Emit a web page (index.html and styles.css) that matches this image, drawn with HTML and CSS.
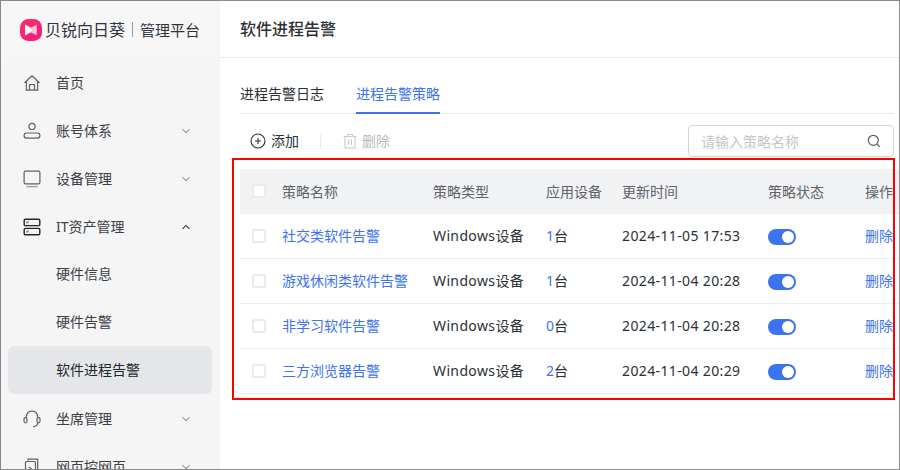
FILE: index.html
```html
<!DOCTYPE html>
<html lang="zh">
<head>
<meta charset="utf-8">
<title>软件进程告警</title>
<link rel="stylesheet" href="styles.css">
</head>
<body>
<div class="app">
  <aside class="sidebar">
    <div class="brand">
      <svg class="logo" width="22" height="22" viewBox="0 0 22 22"><defs><linearGradient id="lg" x1="0" y1="0" x2="1" y2="1"><stop offset="0" stop-color="#ff2f6f"/><stop offset="1" stop-color="#ef1a78"/></linearGradient></defs><rect width="22" height="22" rx="8.5" fill="url(#lg)"/><path d="M5.2 6.3 Q5 5.6 5.8 5.9 L11 8.4 L16.2 5.9 Q17 5.6 16.8 6.3 V15.7 Q17 16.4 16.2 16.1 L11 13.6 L5.8 16.1 Q5 16.4 5.2 15.7 Z" fill="#fbc4d8"/><path d="M5.2 6.3 Q5 5.6 5.8 5.9 L12.5 11 L5.8 16.1 Q5 16.4 5.2 15.7 Z" fill="#fff"/></svg>
      <span class="brand-name">贝锐向日葵</span>
      <span class="brand-sep"></span>
      <span class="brand-sub">管理平台</span>
    </div>
    <nav class="menu">
      <div class="item">
        <svg class="ico" viewBox="0 0 18 18" fill="none" stroke="#5b626c" stroke-width="1.2"><path d="M1.5 8.7 9 1.8l7.5 6.9M3.3 7.2v9h11.4v-9M6.5 16.2v-5.7h5v5.7"/></svg>
        <span class="label">首页</span>
      </div>
      <div class="item">
        <svg class="ico" viewBox="0 0 18 18" fill="none" stroke="#5b626c" stroke-width="1.2"><circle cx="9" cy="4.4" r="3.1"/><rect x="1.1" y="11" width="15.8" height="5.2" rx="2.4"/></svg>
        <span class="label">账号体系</span>
        <svg class="chev" viewBox="0 0 10 6" fill="none" stroke="#666" stroke-width="1"><path d="M1.5 1.2 5 4.6l3.5-3.4"/></svg>
      </div>
      <div class="item">
        <svg class="ico" viewBox="0 0 18 18" fill="none" stroke="#5b626c" stroke-width="1.2"><rect x="1.1" y="1.1" width="15.8" height="12.8" rx="1.5"/><path d="M3.5 16.6h11" stroke="#a5a9af" stroke-width="1.6"/></svg>
        <span class="label">设备管理</span>
        <svg class="chev" viewBox="0 0 10 6" fill="none" stroke="#666" stroke-width="1"><path d="M1.5 1.2 5 4.6l3.5-3.4"/></svg>
      </div>
      <div class="item">
        <svg class="ico" viewBox="0 0 18 18" fill="none" stroke="#23262b" stroke-width="1.4"><rect x="1.2" y="1.2" width="15.6" height="6.4" rx="1.2"/><rect x="1.2" y="10.4" width="15.6" height="6.4" rx="1.2"/><path d="M4 3.4v2.2M4 12.6v2.2" stroke="#5a6a90" stroke-width="1"/><path d="M4 3.9h2M4 13.1h2" stroke="#b5654f" stroke-width="1"/></svg>
        <span class="label">IT资产管理</span>
        <svg class="chev" viewBox="0 0 10 6" fill="none" stroke="#333" stroke-width="1.1"><path d="M1.5 4.8 5 1.4l3.5 3.4"/></svg>
      </div>
      <div class="item sub first"><span class="label">硬件信息</span></div>
      <div class="item sub"><span class="label">硬件告警</span></div>
      <div class="item sub active"><span class="label">软件进程告警</span></div>
      <div class="item">
        <svg class="ico" viewBox="0 0 18 18" fill="none" stroke="#5b626c" stroke-width="1.2"><path d="M3.3 8V6.8a5.7 5.7 0 0 1 11.4 0V8M14.8 13c-.3 2.2-2 3.4-4.6 3.6"/><rect x="1" y="7.6" width="3" height="5.2" rx="1.5"/><rect x="14" y="7.6" width="3" height="5.2" rx="1.5"/></svg>
        <span class="label">坐席管理</span>
        <svg class="chev" viewBox="0 0 10 6" fill="none" stroke="#666" stroke-width="1"><path d="M1.5 1.2 5 4.6l3.5-3.4"/></svg>
      </div>
      <div class="item">
        <svg class="ico" viewBox="0 0 18 18" fill="none" stroke="#5b626c" stroke-width="1.2"><path d="M5 2.5V1.2h9.7v14.5"/><rect x="2.5" y="3.5" width="10" height="13" rx="1"/><path d="M6 9l3 2.5L6 14"/></svg>
        <span class="label">网页控网页</span>
        <svg class="chev" viewBox="0 0 10 6" fill="none" stroke="#666" stroke-width="1"><path d="M1.5 1.2 5 4.6l3.5-3.4"/></svg>
      </div>
    </nav>
  </aside>
  <main class="main">
    <header class="topbar">软件进程告警</header>
    <div class="content">
      <div class="tabs">
        <span class="tab">进程告警日志</span>
        <span class="tab current">进程告警策略</span>
      </div>
      <div class="toolbar">
        <span class="btn">
          <svg width="16" height="16" viewBox="0 0 16 16" fill="none" stroke="#2b2f36" stroke-width="1.1"><circle cx="8" cy="8" r="7"/><path d="M8 5v6M5 8h6"/></svg>
          添加
        </span>
        <span class="tool-sep"></span>
        <span class="btn disabled">
          <svg width="14" height="16" viewBox="0 0 14 16" fill="none" stroke="#c8c9cc" stroke-width="1.1"><path d="M.5 3.5h13M4.5 3.5V1.5h5v2M2 3.5V15h10V3.5M5.5 6.5V12M8.5 6.5V12"/></svg>
          删除
        </span>
        <div class="search">
          <span class="placeholder">请输入策略名称</span>
          <svg width="14" height="14" viewBox="0 0 14 14" fill="none" stroke="#555c66" stroke-width="1.2"><circle cx="6.3" cy="6.3" r="5"/><path d="M10 10l2.8 2.8"/></svg>
        </div>
      </div>
      <div class="table">
        <div class="row head">
          <span class="c0"><i class="check"></i></span><span class="c1">策略名称</span><span class="c2">策略类型</span><span class="c3">应用设备</span><span class="c4">更新时间</span><span class="c5">策略状态</span><span class="c6">操作</span>
        </div>
        <div class="row body">
          <span class="c0"><i class="check"></i></span><span class="c1 link">社交类软件告警</span><span class="c2 latin">Windows设备</span><span class="c3"><b class="link">1</b>台</span><span class="c4 latin">2024-11-05 17:53</span><span class="c5"><i class="switch"></i></span><span class="c6 link">删除</span>
        </div>
        <div class="row body">
          <span class="c0"><i class="check"></i></span><span class="c1 link">游戏休闲类软件告警</span><span class="c2 latin">Windows设备</span><span class="c3"><b class="link">1</b>台</span><span class="c4 latin">2024-11-04 20:28</span><span class="c5"><i class="switch"></i></span><span class="c6 link">删除</span>
        </div>
        <div class="row body">
          <span class="c0"><i class="check"></i></span><span class="c1 link">非学习软件告警</span><span class="c2 latin">Windows设备</span><span class="c3"><b class="link">0</b>台</span><span class="c4 latin">2024-11-04 20:28</span><span class="c5"><i class="switch"></i></span><span class="c6 link">删除</span>
        </div>
        <div class="row body">
          <span class="c0"><i class="check"></i></span><span class="c1 link">三方浏览器告警</span><span class="c2 latin">Windows设备</span><span class="c3"><b class="link">2</b>台</span><span class="c4 latin">2024-11-04 20:29</span><span class="c5"><i class="switch"></i></span><span class="c6 link">删除</span>
        </div>
      </div>
    </div>
    <div class="highlight"></div>
  </main>
</div>
</body>
</html>
```
FILE: styles.css
```css
* { box-sizing: border-box; }
html, body { margin: 0; height: 100%; overflow: hidden; background: #fff; }
body { font-family: "Noto Sans", "Noto Sans CJK SC", sans-serif; font-size: 14px; color: #2b2f36; }
.app { display: flex; width: 900px; height: 470px; border: 1px solid #8a8a8a; overflow: hidden; }
.sidebar { width: 219px; flex: none; background: #f5f5f6; overflow: hidden; }
.brand { height: 57px; background: #f7f7f7; display: flex; align-items: center; padding: 0 0 0 19px; color: #2b2f36; }
.logo { flex: none; margin-right: 3px; }
.brand-name { font-size: 16px; line-height: 22px; color: #30343a; }
.brand-sep { width: 1px; height: 15px; background: #9a9a9a; margin: 0 7px 0 7px; }
.brand-sub { font-size: 15px; line-height: 22px; color: #30343a; }
.menu { padding: 1px 8px 0 7px; }
.item { height: 48px; display: flex; align-items: center; padding-left: 15px; border-radius: 6px; color: #3a3e45; }
.item.sub { padding-left: 48px; }
.item.first { margin-top: -1px; }
.item.active { background: #e5e6ea; color: #23262b; margin-bottom: 1px; }
.ico { width: 18px; height: 18px; flex: none; margin-right: 15px; }
.label { flex: 1; line-height: 20px; }
.chev { width: 10px; height: 6px; flex: none; margin-right: 21px; }
.main { flex: 1; min-width: 0; position: relative; overflow: hidden; }
.topbar { height: 57px; border-bottom: 1px solid #e8e9eb; padding: 0 0 0 20px; line-height: 56px; font-size: 16px; font-weight: 500; color: #2b2f36; }
.content { padding: 0 5px 0 20px; }
.tabs { height: 56px; display: flex; gap: 32px; align-items: flex-end; border-bottom: 1px solid #e8e9eb; }
.tab { height: 30px; line-height: 20px; font-size: 14px; color: #2b2f36; border-bottom: 2px solid transparent; margin-bottom: -1px; }
.tab.current { color: #3d72f2; border-bottom-color: #3d72f2; }
.toolbar { height: 54px; display: flex; align-items: center; padding: 0 0 0 10px; }
.btn { display: flex; align-items: center; gap: 5px; line-height: 20px; }
.btn.disabled { color: #b8babd; }
.tool-sep { width: 1px; height: 14px; background: #e8e9eb; margin: 0 22px 0 21px; }
.search { margin-left: auto; width: 206px; height: 32px; border: 1px solid #d2d4d8; border-radius: 4px; display: flex; align-items: center; justify-content: space-between; padding: 0 12px; }
.placeholder { color: #c4c6ca; }
.table { width: 700px; margin-top: 1px; }
.row { height: 45px; display: flex; align-items: center; border-bottom: 1px solid #eceef3; }
.row.head { background: #f1f2f4; color: #5f6368; border-bottom-color: #ebedf0; }
.c0 { width: 42px; padding-left: 12px; display: flex; }
.c1 { width: 151px; }
.c2 { width: 113px; }
.c3 { width: 76px; }
.c4 { width: 146px; }
.c5 { width: 97px; display: flex; }
.c6 { width: 60px; }
.body .c1, .body .c2, .body .c3, .body .c4, .body .c6 { margin-bottom: 2px; }
.latin { letter-spacing: .37px; }
.link { color: #3d72f2; font-weight: 400; }
.check { width: 14px; height: 14px; background: #fff; border: 2px solid #ebebec; border-radius: 2px; }
.switch { width: 28px; height: 16px; border-radius: 8px; background: #3d72f2; position: relative; margin-top: 2px; }
.switch::after { content: ""; position: absolute; right: 2px; top: 2px; width: 12px; height: 12px; border-radius: 50%; background: #fff; }
.highlight { position: absolute; left: 12px; top: 157px; width: 663px; height: 242px; border: 2px solid #f00; }
```
